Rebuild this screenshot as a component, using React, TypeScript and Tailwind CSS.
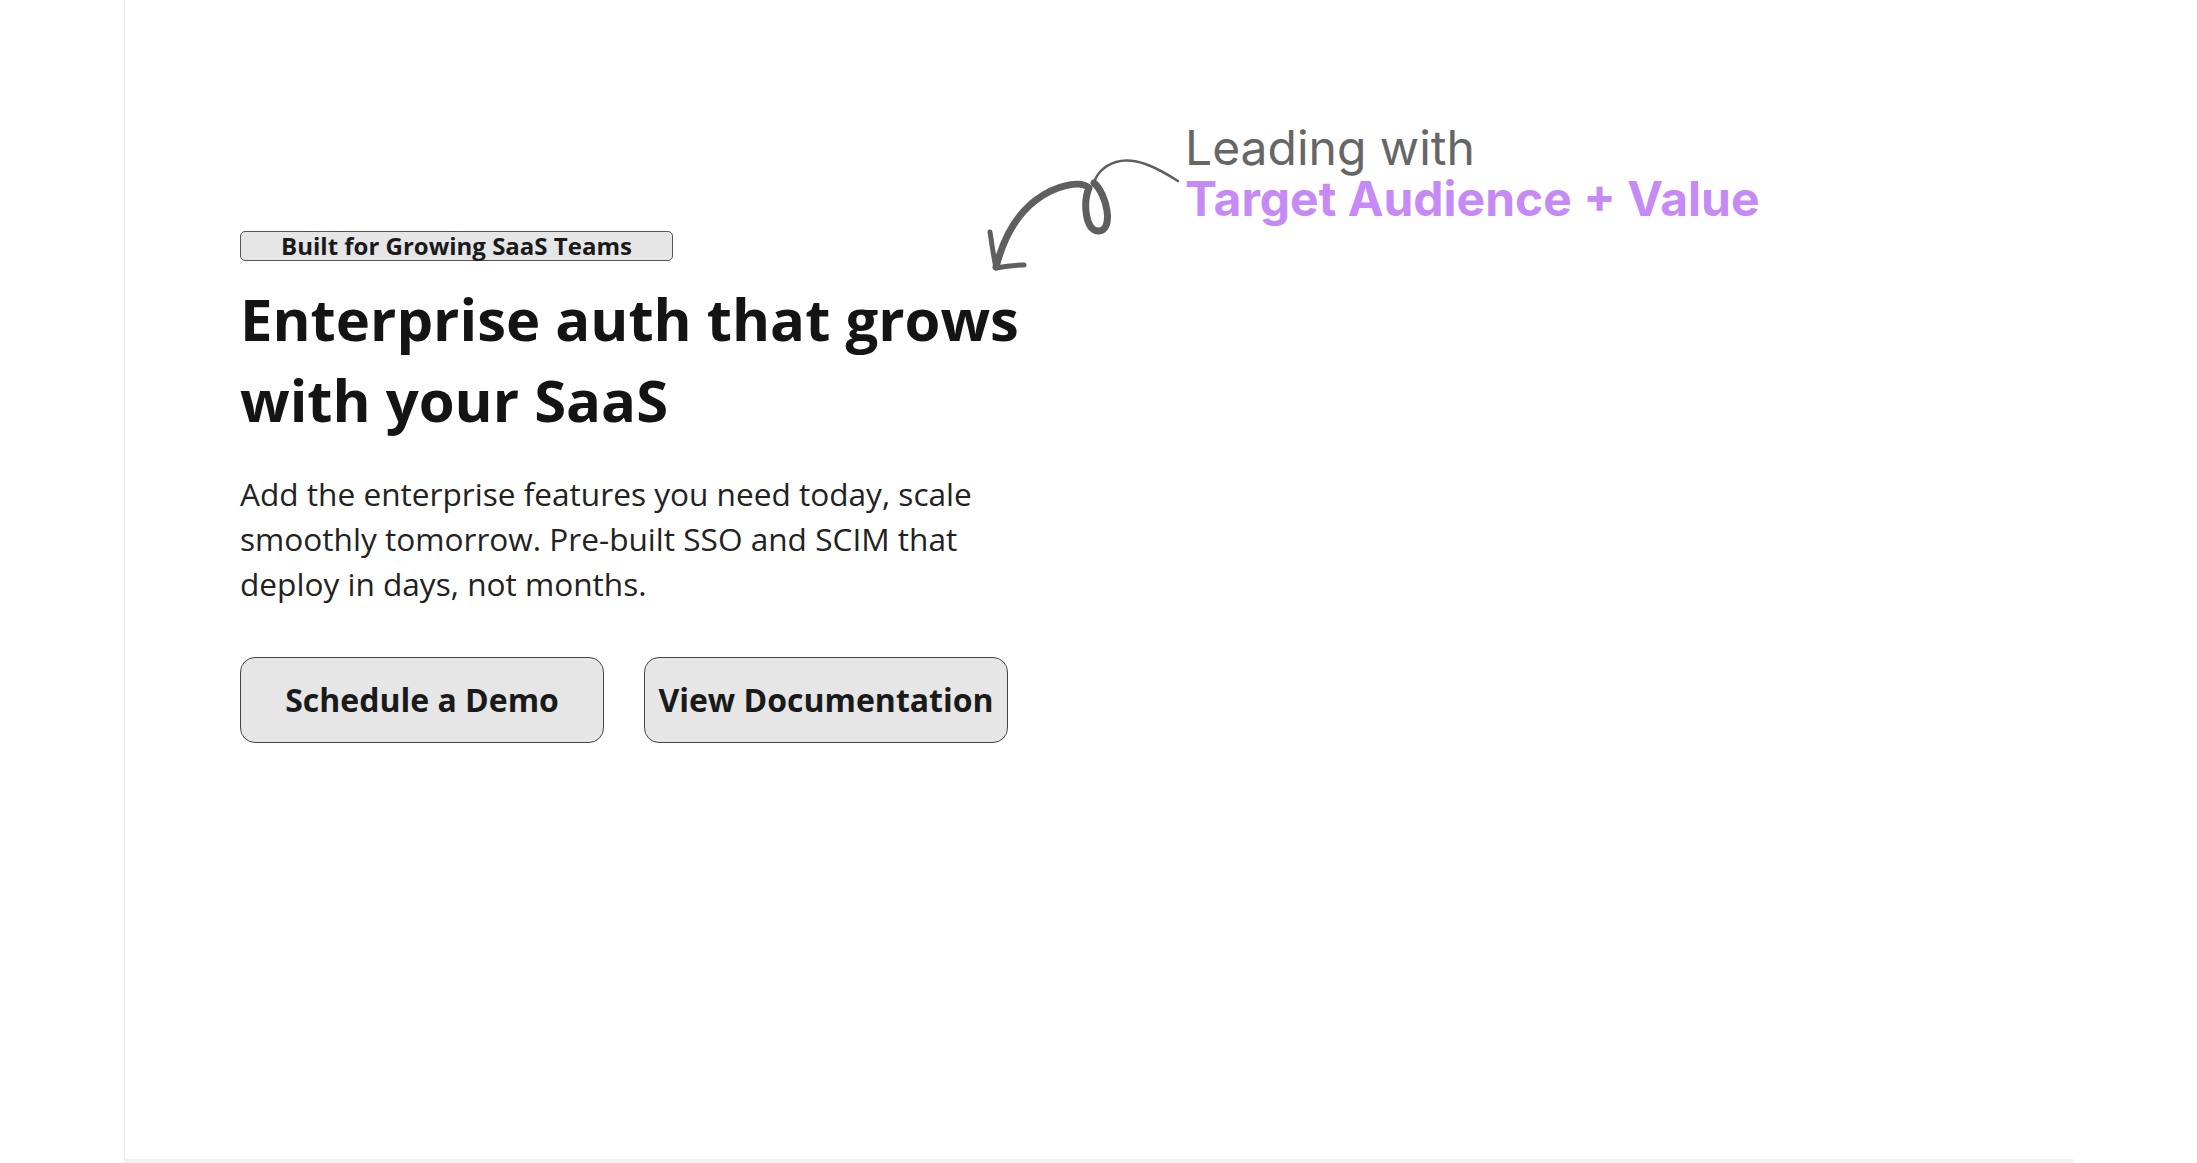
// Hero section with annotation callout
export default function App() {
  return (
    <main className="min-h-screen bg-white" style={{ fontFamily: '"Open Sans", sans-serif' }}>
      <div className="relative ml-[124px] w-[1949px] h-[1163px] border-l border-[#ececec] border-b-4 border-b-[#f2f2f2] bg-white">
        <section className="pl-[115px] pt-[231px] flex flex-col items-start">
          <div className="w-[433px] h-[30px] flex items-center justify-center rounded-[5px] border-[1.5px] border-[#555] bg-[#e6e6e6] text-[24px] font-bold text-[#1a1a1a] leading-none">
            Built for Growing SaaS Teams
          </div>

          <h1 className="mt-[17px] w-[830px] text-[58px] font-bold leading-[81px] text-[#141414]">
            Enterprise auth that grows with your SaaS
          </h1>

          <p className="mt-[31px] w-[800px] text-[31.6px] leading-[45px] text-[#222]">
            Add the enterprise features you need today, scale smoothly tomorrow. Pre-built SSO and SCIM that
            deploy in days, not months.
          </p>

          <div className="mt-[51px] flex gap-[40px]">
            <button className="w-[364px] h-[86px] rounded-[15px] border-[1.5px] border-[#444] bg-[#e6e6e6] text-[32px] font-bold text-[#1a1a1a]">
              Schedule a Demo
            </button>
            <button className="w-[364px] h-[86px] rounded-[15px] border-[1.5px] border-[#444] bg-[#e6e6e6] text-[32px] font-bold text-[#1a1a1a]">
              View Documentation
            </button>
          </div>
        </section>

        {/* annotation */}
        <svg
          className="absolute left-[856px] top-[150px]"
          width="210"
          height="125"
          viewBox="0 0 210 125"
          fill="none"
          stroke="#5f5f5f"
          strokeLinecap="round"
          strokeLinejoin="round"
        >
          <path d="M197 31 C178 19 155 6 135 12 C122 16 115 25 113 33" strokeWidth="2.5" />
          <path
            d="M113 33 C126 44 133 80 118 81 C104 82 102 52 108 38 C100 30 75 35 55 50 C35 65 22 90 15 117"
            strokeWidth="7"
          />
          <path d="M9 82 C11 96 13 108 15 118 C25 116 35 115 43 115" strokeWidth="5" />
        </svg>

        <div
          className="absolute left-[1060px] top-[122px] text-[48px] leading-[51px]"
          style={{ fontFamily: 'Inter, sans-serif' }}
        >
          <div className="text-[#666]">Leading with</div>
          <div className="font-bold text-[#c68af7]">Target Audience + Value</div>
        </div>
      </div>
    </main>
  );
}
